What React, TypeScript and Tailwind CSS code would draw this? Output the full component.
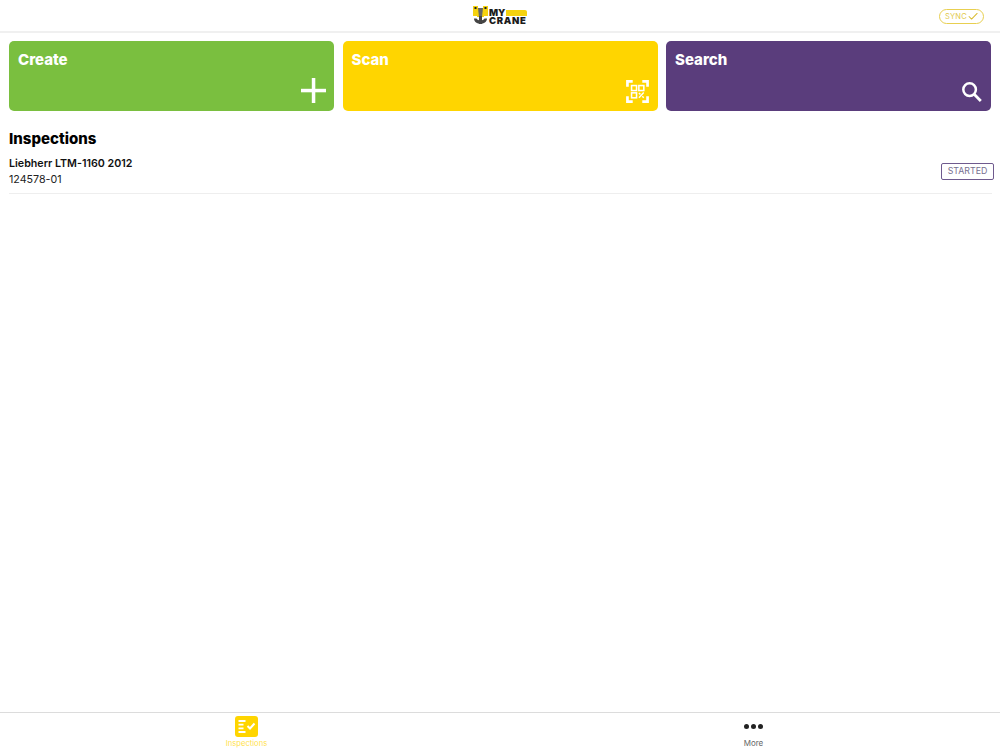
import { Check } from "lucide-react";

const PlusIcon = () => (
  <svg width="25" height="25" viewBox="0 0 25 25" fill="white" className="mr-[-1px]">
    <rect x="10.8" width="3.5" height="25" />
    <rect y="10.8" width="25" height="3.5" />
  </svg>
);

const QrIcon = () => (
  <svg width="23" height="23" viewBox="0 0 24 24" fill="none" stroke="white">
    <path d="M1.5 7V1.5H7M17 1.5h5.5V7M22.5 17v5.5H17M7 22.5H1.5V17" strokeWidth="2.8" />
    <rect x="5.8" y="5.8" width="5.2" height="5.2" strokeWidth="1.6" />
    <rect x="13.4" y="5.8" width="5.2" height="5.2" strokeWidth="1.6" />
    <rect x="5.8" y="13.4" width="5.2" height="5.2" strokeWidth="1.6" />
    <path d="M13.5 13.5l1.5 1.5M18.5 13l-5 5.5M17 17l1.5 1.5" strokeWidth="1.5" />
  </svg>
);

const SearchIcon = () => (
  <svg width="20" height="20" viewBox="0 0 20 20" fill="none" stroke="white" className="mb-[1px]">
    <circle cx="7.6" cy="7.6" r="6.3" strokeWidth="2.5" />
    <path d="M12.2 12.2l6.6 6.8" strokeWidth="2.8" />
  </svg>
);

const InspectionsIcon = () => (
  <svg width="23" height="21" viewBox="0 0 23 21">
    <rect width="23" height="21" rx="3" fill="#ffd500" />
    <path d="M3.5 5h7M3.5 8.7h5M3.5 12.4h5M3.5 16h7" stroke="white" strokeWidth="1.8" />
    <path d="M12.5 10l2.5 2.5 4.5-5" stroke="white" strokeWidth="2" fill="none" />
  </svg>
);

const Logo = () => (
  <div className="flex items-center h-[19px] w-[54px]">
    <svg width="15" height="19" viewBox="0 0 15 19" className="shrink-0">
      <path d="M0 0h5v2h5V0h5v10h-4v1H4v-1H0z" fill="#f5d20f" />
      <rect x="1.5" y="1" width="2" height="2" fill="#222" />
      <rect x="11.5" y="1" width="2" height="2" fill="#222" />
      <path d="M5 2h5l-1 9H6z" fill="#666" />
      <path d="M1 12.5c0 7 13 7 13 0l-2.5 0c-1 2.5-7 2.5-8 0z" fill="#444" />
      <rect x="6" y="10" width="3" height="8" fill="#444" />
    </svg>
    <div className="flex flex-col ml-[1px] mt-[3px] font-black text-[#1c1c1c] text-[9.5px] leading-[8px]">
      <div className="flex items-center">
        <span>MY</span>
        <span className="ml-[1px] h-[6px] flex-1 min-w-[21px] bg-[#f5d20f] rounded-tr-[2px]" />
      </div>
      <span className="tracking-[0.7px]">CRANE</span>
    </div>
  </div>
);

const cards = [
  { title: "Create", width: "w-[325px]", bg: "bg-[#7abf3f]", icon: <PlusIcon /> },
  { title: "Scan", width: "w-[315px]", bg: "bg-[#ffd500]", icon: <QrIcon /> },
  { title: "Search", width: "w-[325px]", bg: "bg-[#5a3d7c]", icon: <SearchIcon /> },
];

export default function App() {
  return (
    <div className="flex flex-col h-[750px] w-[1000px] bg-white font-['Inter',sans-serif] overflow-hidden">
      <header className="relative flex items-center justify-center h-[33px] shrink-0 border-b-2 border-[#f0f0f0]">
        <Logo />
        <div className="absolute right-[16px] top-[9px] flex items-center justify-between w-[45px] h-[15px] pl-[5px] pr-[4px] border border-[#e8cf50] rounded-full">
          <span className="text-[7.5px] text-[#e2c94c] tracking-[0.2px]">SYNC</span>
          <Check size={13} color="#d9bc30" strokeWidth={2} />
        </div>
      </header>

      <div className="flex gap-[8.5px] px-[9px] pt-[8px]">
        {cards.map((card) => (
          <div key={card.title} className={`${card.width} ${card.bg} h-[70px] rounded-[5px] flex flex-col justify-between px-[9px] pt-[9px] pb-[8px]`}>
            <span className="text-[15px] leading-[20px] font-extrabold text-white">{card.title}</span>
            <div className="flex justify-end">{card.icon}</div>
          </div>
        ))}
      </div>

      <main className="flex-1 px-[9px] pt-[17px]">
        <h1 className="text-[15px] leading-[22px] font-extrabold text-black">Inspections</h1>
        <div className="flex items-center justify-between mt-[6px] pb-[5px] border-b border-[#eeeeee] w-[983px]">
          <div>
            <div className="text-[10.7px] leading-[16px] font-semibold text-[#111]">Liebherr LTM-1160 2012</div>
            <div className="text-[10.7px] leading-[16px] text-[#222]">124578-01</div>
          </div>
          <span className="mr-[-2px] mt-[-2px] w-[53px] justify-center h-[17px] flex items-center border border-[#6f5a8e] rounded-[2px] text-[8.8px] text-[#77708f]">STARTED</span>
        </div>
      </main>

      <nav className="flex h-[38px] shrink-0 border-t border-[#dcdcdc]">
        <div className="flex-1 flex flex-col items-center pt-[3px] pr-[5px]">
          <InspectionsIcon />
          <span className="text-[7.6px] leading-[10px] mt-[2px] text-[#ffe24d]">Inspections</span>
        </div>
        <div className="flex-1 flex flex-col items-center pt-[3px] pl-[9px]">
          <div className="h-[21px] flex items-center gap-[2px]">
            <span className="w-[5px] h-[5px] rounded-full bg-[#222]" />
            <span className="w-[5px] h-[5px] rounded-full bg-[#222]" />
            <span className="w-[5px] h-[5px] rounded-full bg-[#222]" />
          </div>
          <span className="text-[8px] leading-[10px] mt-[1px] text-[#666]">More</span>
        </div>
      </nav>
    </div>
  );
}
